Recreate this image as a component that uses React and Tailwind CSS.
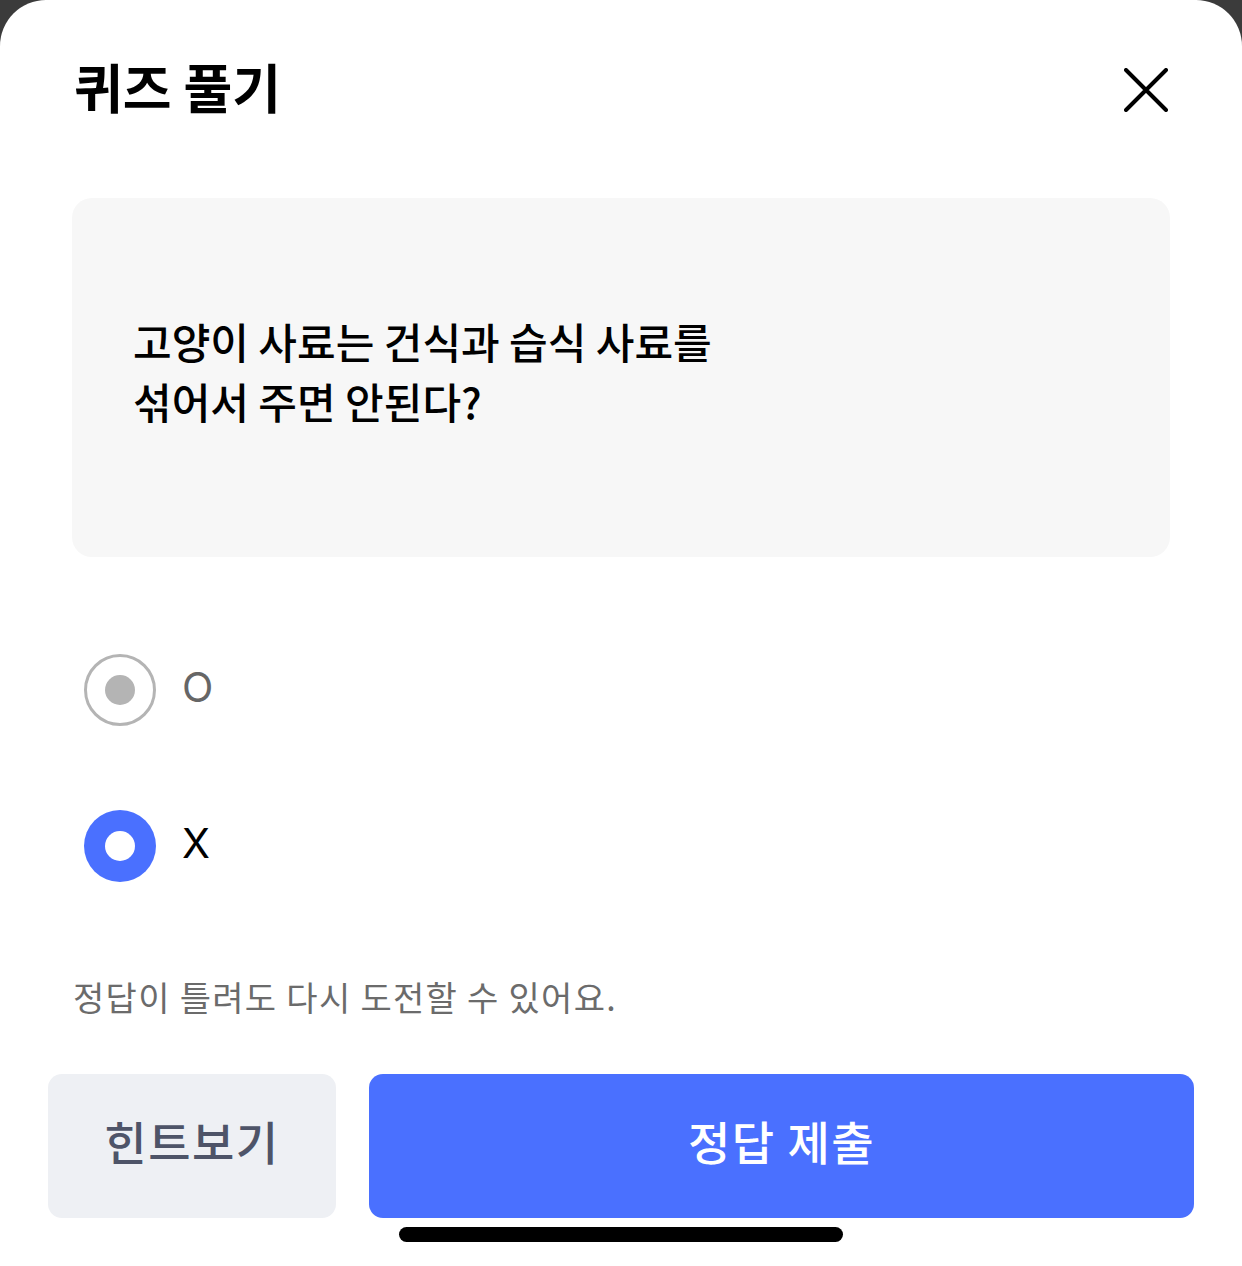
import React, { useState } from "react";

const font = { fontFamily: '"Noto Sans CJK KR", "Noto Sans", sans-serif' };

const options = [
  { id: "o", label: "O" },
  { id: "x", label: "X" },
];

const Radio = ({ checked, label, onClick }) => (
  <button onClick={onClick} className="flex items-center gap-[26px] h-[72px]">
    {checked ? (
      <span className="w-[72px] h-[72px] rounded-full bg-[#4a70ff] flex items-center justify-center">
        <span className="w-[30px] h-[30px] rounded-full bg-white" />
      </span>
    ) : (
      <span className="w-[72px] h-[72px] rounded-full border-[3px] border-[#b4b4b4] flex items-center justify-center">
        <span className="w-[30px] h-[30px] rounded-full bg-[#b4b4b4]" />
      </span>
    )}
    <span
      className={`text-[41px] leading-none pb-[6px] ${checked ? "text-black" : "text-[#666666]"}`}
      style={{ fontFamily: '"Inter", "Noto Sans", sans-serif' }}
    >
      {label}
    </span>
  </button>
);

export default function App() {
  const [answer, setAnswer] = useState("x");

  return (
    <div className="w-full h-[1266px] bg-[#3b3b3b]" style={font}>
      <div className="w-full h-full bg-white rounded-t-[46px] flex flex-col overflow-hidden">
        {/* header */}
        <div className="mt-[68px] h-[44px] flex items-center justify-between pl-[74px] pr-[74px]">
          <h1 className="text-[53px] font-bold leading-none text-black pb-[8px]">퀴즈 풀기</h1>
          <svg width="44" height="44" viewBox="0 0 44 44" fill="none" stroke="black" strokeWidth="4" strokeLinecap="round">
            <path d="M2 2 L42 42 M42 2 L2 42" />
          </svg>
        </div>

        {/* question */}
        <div className="mt-[86px] mx-[72px] h-[359px] bg-[#f7f7f7] rounded-[20px] flex items-center pl-[61px] pb-[14px]">
          <p className="text-[42px] font-medium leading-[60px] text-black">
            고양이 사료는 건식과 습식 사료를
            <br />
            섞어서 주면 안된다?
          </p>
        </div>

        {/* options */}
        <div className="mt-[97px] ml-[84px] flex flex-col gap-[84px] items-start">
          {options.map((o) => (
            <Radio key={o.id} label={o.label} checked={answer === o.id} onClick={() => setAnswer(o.id)} />
          ))}
        </div>

        <p className="mt-[95px] ml-[73px] text-[34px] leading-[40px] tracking-[1.3px] text-[#6b6b6b]">
          정답이 틀려도 다시 도전할 수 있어요.
        </p>

        {/* actions */}
        <div className="mt-[57px] px-[48px] flex gap-[33px]">
          <button className="w-[288px] h-[144px] pb-[12px] rounded-[14px] bg-[#eef0f4] text-[#4e5468] text-[46px] font-medium tracking-[1.5px]">
            힌트보기
          </button>
          <button className="flex-1 h-[144px] pb-[12px] rounded-[14px] bg-[#4a70ff] text-white text-[46px] font-medium tracking-[1.5px]">
            정답 제출
          </button>
        </div>

        <div className="mt-[9px] mx-auto w-[444px] h-[15px] rounded-full bg-black" />
      </div>
    </div>
  );
}
